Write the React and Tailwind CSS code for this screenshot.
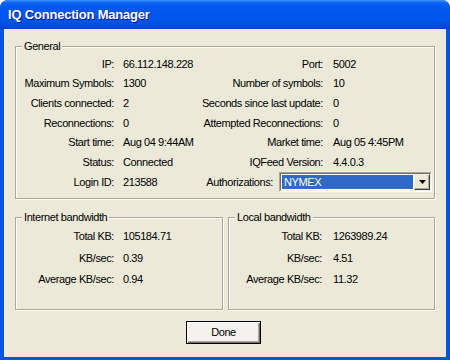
import React from "react";

const general = [
  ["IP:", "66.112.148.228", "Port:", "5002"],
  ["Maximum Symbols:", "1300", "Number of symbols:", "10"],
  ["Clients connected:", "2", "Seconds since last update:", "0"],
  ["Reconnections:", "0", "Attempted Reconnections:", "0"],
  ["Start time:", "Aug 04 9:44AM", "Market time:", "Aug 05 4:45PM"],
  ["Status:", "Connected", "IQFeed Version:", "4.4.0.3"],
];

const internet = [
  ["Total KB:", "105184.71"],
  ["KB/sec:", "0.39"],
  ["Average KB/sec:", "0.94"],
];

const local = [
  ["Total KB:", "1263989.24"],
  ["KB/sec:", "4.51"],
  ["Average KB/sec:", "11.32"],
];

// etched group box, like the classic windows frame
const Group = ({ title, className, children }) => (
  <fieldset
    className={`min-w-0 border border-[#ACA899] shadow-[inset_1px_1px_0_#fff,1px_1px_0_#fff] ${className}`}
  >
    <legend className="ml-[6px] px-[2px] bg-[#ECE9D8] leading-[13px]">{title}</legend>
    {children}
  </fieldset>
);

const Label = ({ children }) => (
  <div className="min-w-0 flex justify-end items-center whitespace-nowrap">{children}</div>
);

const ComboBox = () => (
  <div className="w-[153px] shrink-0 h-[20px] ml-[6px] border border-t-[#ACA899] border-l-[#ACA899] border-b-white border-r-white">
    <div className="h-full flex border border-t-[#716F64] border-l-[#716F64] border-b-[#F1EFE2] border-r-[#F1EFE2] bg-white">
      <div className="flex-1 m-[1px] bg-[#316AC5] text-white flex items-center pl-[2px]">NYMEX</div>
      <div className="w-[16px] h-full flex items-center justify-center bg-[#ECE9D8] border border-t-[#F1EFE2] border-l-[#F1EFE2] border-b-[#404040] border-r-[#404040] shadow-[inset_-1px_-1px_0_#ACA899]">
        <svg width="7" height="4" viewBox="0 0 7 4">
          <path d="M0 0h7L3.5 4z" fill="#000" />
        </svg>
      </div>
    </div>
  </div>
);

const App = () => {
  return (
    <div className="w-[450px] h-[360px] bg-white">
      <div
        className="w-[450px] h-[360px] flex flex-col rounded-t-[8px] overflow-hidden bg-[#0055E5] text-[11px] tracking-[-0.4px] text-black"
        style={{ fontFamily: '"Liberation Sans", Arial, sans-serif' }}
      >
        {/* Title bar */}
        <div className="h-[29px] shrink-0 flex items-center pl-[8px] bg-[linear-gradient(to_bottom,#3D95FF_0px,#0A62F2_3px,#0058EE_8px,#0055EB_20px,#0049D8_27px,#003DC8_29px)]">
          <span className="text-white font-bold text-[13px] tracking-[-0.2px] [text-shadow:1px_1px_0_#0A1883]">
            IQ Connection Manager
          </span>
        </div>

        {/* Body */}
        <div className="flex-1 ml-[4px] mr-[4px] mb-[3px] bg-[#ECE9D8] flex flex-col pt-[11px]">
          <Group title="General" className="mx-[11px] pt-[1px] pb-[6px]">
            <div className="grid grid-cols-[98px_105px_104px_minmax(0,1fr)] auto-rows-[19.67px]">
              {general.map(([l1, v1, l2, v2]) => (
                <React.Fragment key={l1}>
                  <Label>{l1}</Label>
                  <div className="min-w-0 pl-[9px] flex items-center whitespace-nowrap">{v1}</div>
                  <Label>{l2}</Label>
                  <div className="min-w-0 pl-[10px] flex items-center whitespace-nowrap">{v2}</div>
                </React.Fragment>
              ))}
            </div>
            {/* login / authorizations row */}
            <div className="h-[19.67px] flex items-center whitespace-nowrap">
              <div className="w-[98px] shrink-0 text-right">Login ID:</div>
              <div className="w-[86px] shrink-0 pl-[9px]">213588</div>
              <div className="w-[73px] shrink-0 text-right">Authorizations:</div>
              <ComboBox />
            </div>
          </Group>

          <div className="mx-[11px] mt-[12px] flex gap-[5px]">
            <Group title="Internet bandwidth" className="w-[208px] pt-[2px] pb-[19px]">
              <div className="grid grid-cols-[98px_1fr] auto-rows-[21.5px]">
                {internet.map(([l, v]) => (
                  <React.Fragment key={l}>
                    <Label>{l}</Label>
                    <div className="pl-[9px] flex items-center">{v}</div>
                  </React.Fragment>
                ))}
              </div>
            </Group>
            <Group title="Local bandwidth" className="flex-1 pt-[2px] pb-[19px]">
              <div className="grid grid-cols-[93px_1fr] auto-rows-[21.5px]">
                {local.map(([l, v]) => (
                  <React.Fragment key={l}>
                    <Label>{l}</Label>
                    <div className="pl-[11px] flex items-center">{v}</div>
                  </React.Fragment>
                ))}
              </div>
            </Group>
          </div>

          <div className="mt-[11px] pl-[182px]">
            <button className="w-[75px] h-[23px] border border-black bg-[#F3F2EC] shadow-[inset_1px_1px_0_#fff,inset_-1px_-1px_0_#716F64,inset_-2px_-2px_0_#ACA899] flex items-center justify-center">
              Done
            </button>
          </div>
        </div>
      </div>
    </div>
  );
};

export default App;
